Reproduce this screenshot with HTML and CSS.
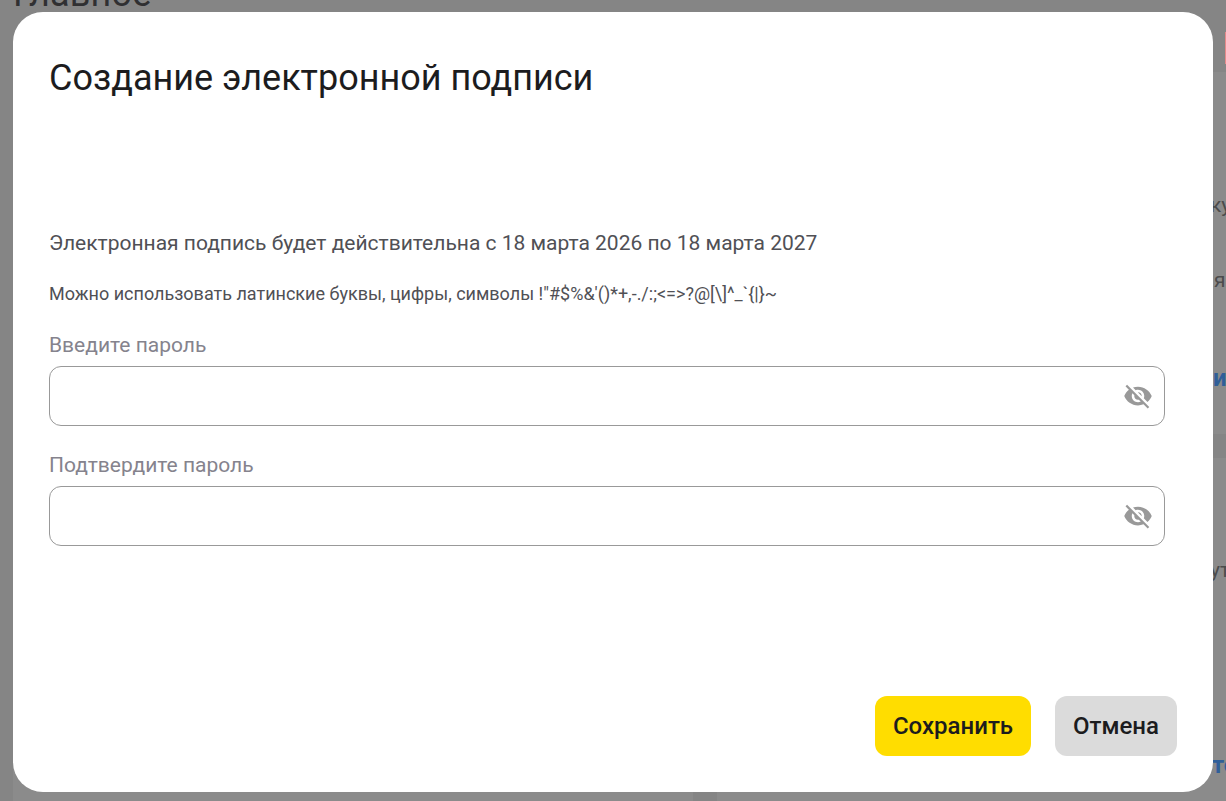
FILE: index.html
```html
<!DOCTYPE html>
<html lang="ru">
<head>
<meta charset="utf-8">
<title>Создание электронной подписи</title>
<link rel="stylesheet" href="styles.css">
</head>
<body>
<div class="page">
  <header class="page-header"><h2 class="page-title">Главное</h2><span class="alert"></span></header>
  <div class="columns">
    <div class="card"></div>
    <div class="side">
      <div class="card card-first">
        <p class="line line-query">ку</p>
        <p class="line line-next">я</p>
        <p class="line link">и</p>
      </div>
      <div class="card card-second">
        <p class="line line-route">ут</p>
        <p class="line link link-low">то</p>
      </div>
    </div>
  </div>
</div>
<div class="backdrop">
  <main class="dialog">
    <h1 class="title">Создание электронной подписи</h1>
    <p class="validity">Электронная подпись будет действительна с 18 марта 2026 по 18 марта 2027</p>
    <p class="hint">Можно использовать латинские буквы, цифры, символы !"#$%&amp;'()*+,-./:;&lt;=&gt;?@[\]^_`{|}~</p>
    <label class="field">
      <span class="label">Введите пароль</span>
      <span class="control"><input class="input" type="password">
        <svg class="eye" viewBox="0 0 24 24"><use href="#eye-off"/></svg></span>
    </label>
    <label class="field">
      <span class="label">Подтвердите пароль</span>
      <span class="control"><input class="input" type="password">
        <svg class="eye" viewBox="0 0 24 24"><use href="#eye-off"/></svg></span>
    </label>
    <div class="actions">
      <button class="button primary">Сохранить</button>
      <button class="button secondary">Отмена</button>
    </div>
  </main>
</div>
<svg class="symbols" width="0" height="0">
  <symbol id="eye-off" viewBox="0 0 24 24">
    <path fill="#999" d="M12 7c2.760 0 5 2.240 5 5 0 .65-.13 1.260-.36 1.830l2.920 2.920c1.510-1.260 2.700-2.890 3.430-4.750-1.730-4.390-6-7.500-11-7.500-1.400 0-2.740.25-3.980.7l2.160 2.160C10.740 7.130 11.350 7 12 7zM2 4.270l2.280 2.280.46.46C3.080 8.300 1.780 10.020 1 12c1.730 4.390 6 7.500 11 7.500 1.550 0 3.030-.3 4.380-.84l.42.42L19.730 22 21 20.730 3.270 3 2 4.270zM7.530 9.800l1.550 1.550c-.05.21-.08.43-.08.65 0 1.660 1.340 3 3 3 .22 0 .44-.03.65-.08l1.550 1.550c-.67.33-1.410.53-2.200.53-2.760 0-5-2.240-5-5 0-.79.2-1.530.53-2.200zm4.310-.78l3.150 3.150.02-.16c0-1.660-1.340-3-3-3l-.17.01z"/>
  </symbol>
</svg>
</body>
</html>
```
FILE: styles.css
```css
* { box-sizing: border-box; }
body { margin: 0; font-family: Roboto, sans-serif; overflow: hidden; }
h1, h2, p { margin: 0; font-weight: 400; }
.page { height: 801px; background: #858585; overflow: hidden; padding-left: 13px; }
.page-header { height: 72px; display: flex; justify-content: space-between; }
.page-title { font-size: 36px; line-height: 42px; letter-spacing: .2px; margin-top: -27px; color: #303032; }
.alert { width: 1px; height: 32px; margin-top: 32px; background: #e58a8a; }
.columns { display: grid; grid-template-columns: 680px 680px; gap: 24px; height: 729px; }
.card { background: #8b8b8b; padding-left: 494px; }
.side { display: grid; grid-template-rows: 362px 343px; gap: 24px; }
.line { font-size: 21px; line-height: 24px; color: #4c4c4c; }
.card-first { padding-top: 121px; }
.line-query { margin-left: -1px; }
.line-next { margin: 51px 0 74px 3px; }
.link { color: #305f99; font-weight: 700; font-size: 24px; margin-left: 2px; }
.card-second { padding-top: 100px; }
.line-route { margin-left: -1px; }
.link-low { margin: 171px 0 0 1px; }
.backdrop { position: fixed; inset: 0; padding: 12px 13px 9px; }
.dialog { height: 780px; display: flex; flex-direction: column; background: #fff; border-radius: 30px; padding: 45px 36px 36px; }
.title { font-size: 36px; line-height: 42px; color: #1c1c1e; }
.validity { margin-top: 132px; font-size: 21px; line-height: 24px; color: #505055; }
.hint { margin-top: 27px; font-size: 18px; line-height: 24px; color: #505055; }
.field { margin-top: 27px; margin-right: 12px; }
.label { display: block; font-size: 21px; line-height: 24px; color: #85838d; }
.control { display: flex; align-items: center; height: 60px; margin-top: 9px; padding-right: 11px; border: 1px solid #999; border-radius: 12px; }
.input { flex: 1; border: 0; outline: 0; background: transparent; height: 40px; }
.eye { width: 30px; height: 30px; }
.actions { display: flex; justify-content: flex-end; gap: 24px; margin-top: auto; }
.button { height: 60px; border: 0; border-radius: 12px; padding: 0; color: #1c1c1e; font: 500 24px/28px Roboto, sans-serif; }
.primary { width: 156px; background: #ffdd00; }
.secondary { width: 122px; background: #dbdbdb; }
.symbols { position: absolute; }
```
